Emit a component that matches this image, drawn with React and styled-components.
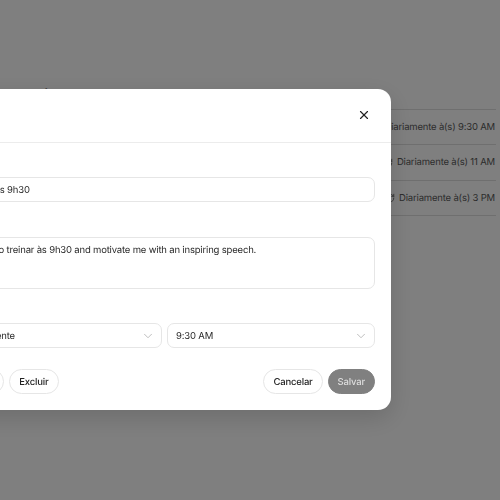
import React from 'react'
import styled, { createGlobalStyle } from 'styled-components'
import { ChevronDown, RefreshCw, X } from 'lucide-react'

const Global = createGlobalStyle`
  html, body {
    margin: 0;
    height: 100%;
    overflow: hidden;
    background: #fff;
    font-family: Inter, "Liberation Sans", sans-serif;
    font-size: 9.5px;
    letter-spacing: -0.18px;
    text-rendering: geometricPrecision;
    color: #0d0d0d;
  }
`

const Page = styled.div`
  padding: 79px 4px 0 1px;
`

const Heading = styled.h1`
  margin: 0;
  height: 30px;
  font-size: 19px;
  line-height: 35px;
  letter-spacing: 0;
  font-weight: 600;
`

const List = styled.div`
  border-top: 1px solid #dedede;
`

const Row = styled.div`
  display: flex;
  justify-content: flex-end;
  align-items: center;
  gap: 4px;
  box-sizing: border-box;
  height: 35.3px;
  padding: 1px 1px 0 0;
  border-bottom: 1px solid #dedede;
  color: #5a5a5a;
`

const Overlay = styled.div`
  position: fixed;
  inset: 0;
  display: flex;
  justify-content: flex-end;
  padding: 89px 109px 0 0;
  background: rgba(0, 0, 0, 0.5);
`

const Modal = styled.div`
  flex: 0 0 453px;
  height: 321px;
  background: #fff;
  border-radius: 13px;
  box-shadow: 0 8px 24px rgba(0, 0, 0, 0.15);
`

const ModalHeader = styled.div`
  display: flex;
  justify-content: space-between;
  align-items: center;
  box-sizing: border-box;
  height: 53.5px;
  padding: 0 20px 0 16px;
  border-bottom: 1px solid #ececec;
  font-size: 12px;
  font-weight: 600;
`

const CloseButton = styled.button`
  display: flex;
  padding: 0;
  border: 0;
  background: none;
  color: #222;
`

const Body = styled.div`
  display: flex;
  flex-direction: column;
  padding: 0 16px;
`

const Label = styled.div`
  height: 34.5px;
  display: flex;
  align-items: center;
  color: #9a9a9a;
`

const Field = styled.div`
  display: flex;
  align-items: center;
  box-sizing: border-box;
  height: 25px;
  padding: 1px 8px 0;
  border: 1px solid #e6e6e6;
  border-radius: 7px;
  color: #2a2a2a;
  line-height: 13px;
`

const TextInput = styled(Field)`
  padding-left: 10px;
`

const TextArea = styled(Field)`
  align-items: flex-start;
  height: 52px;
  padding: 6px 6px;
`

const Selects = styled.div`
  display: grid;
  grid-template-columns: 1fr 1fr;
  gap: 5px;
`

const SelectBox = styled(Field)`
  padding-right: 6px;
`

const SelectValue = styled.span`
  flex: 1;
`

const Actions = styled.div`
  display: flex;
  align-items: center;
  gap: 5px;
  margin-top: 21px;
`

const Spacer = styled.div`
  flex: 1;
`

const Pill = styled.button`
  height: 25px;
  padding: 1px 9px 0;
  border: 1px solid ${p => (p.$primary ? '#808080' : '#e6e6e6')};
  border-radius: 13px;
  background: ${p => (p.$primary ? '#808080' : '#fff')};
  color: ${p => (p.$primary ? '#dedede' : '#222')};
  font: 500 9.5px Inter, "Liberation Sans", sans-serif;
  letter-spacing: -0.18px;
  text-rendering: geometricPrecision;
`

const schedules = [
  { id: 1, when: 'Diariamente à(s) 9:30 AM' },
  { id: 2, when: 'Diariamente à(s) 11 AM' },
  { id: 3, when: 'Diariamente à(s) 3 PM' },
]

function Select({ value }) {
  return (
    <SelectBox>
      <SelectValue>{value}</SelectValue>
      <ChevronDown size={14} strokeWidth={1.4} color="#b0b0b0" />
    </SelectBox>
  )
}

export default function App() {
  return (
    <>
      <Global />
      <Page>
        <Heading>Ambientes</Heading>
        <List>
          {schedules.map(s => (
            <Row key={s.id}>
              <RefreshCw size={10} />
              {s.when}
            </Row>
          ))}
        </List>
      </Page>
      <Overlay>
        <Modal>
          <ModalHeader>
            Editar
            <CloseButton><X size={14} strokeWidth={2} /></CloseButton>
          </ModalHeader>
          <Body>
            <Label>Nome</Label>
            <TextInput>Treino às 9h30</TextInput>
            <Label>Instruções</Label>
            <TextArea>Ask me to treinar às 9h30 and motivate me with an inspiring speech.</TextArea>
            <Label>Quando</Label>
            <Selects>
              <Select value="Diariamente" />
              <Select value="9:30 AM" />
            </Selects>
            <Actions>
              <Pill>Pausar</Pill>
              <Pill>Excluir</Pill>
              <Spacer />
              <Pill>Cancelar</Pill>
              <Pill $primary>Salvar</Pill>
            </Actions>
          </Body>
        </Modal>
      </Overlay>
    </>
  )
}
